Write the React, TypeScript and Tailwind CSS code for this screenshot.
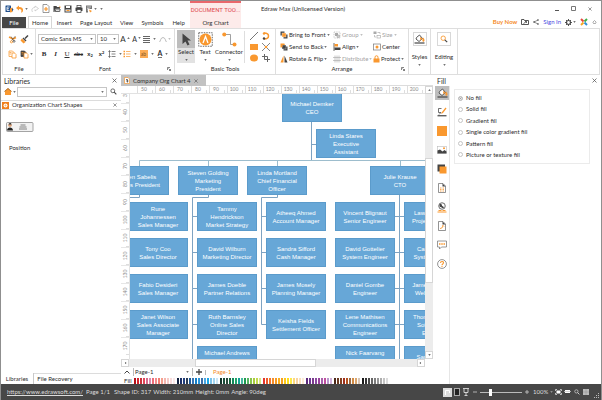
import React from "react";
import type { ReactNode } from "react";

const O = "#f9982f";
const D = "#444444";

function Svg({ w, h, vb, children }: { w: number; h: number; vb?: string; children: ReactNode }) {
  return (
    <svg width={w} height={h} viewBox={vb ?? `0 0 ${w} ${h}`} className="block shrink-0" fill="none" aria-hidden="true">
      {children}
    </svg>
  );
}

function Caret({ color = D }: { color?: string }) {
  return (
    <Svg w={3} h={2} vb="0 0 6 4">
      <path d="M0.5 0.5h5L3 3.5z" fill={color} />
    </Svg>
  );
}

function Cross({ s = 5 }: { s?: number }) {
  return (
    <Svg w={s} h={s} vb="0 0 10 10">
      <path d="M1 1l8 8M9 1l-8 8" stroke="#555" strokeWidth="1.5" />
    </Svg>
  );
}

function Launcher() {
  return (
    <Svg w={4} h={4} vb="0 0 8 8">
      <path d="M1 6V1h5M3 3l4 4M7 4v3H4" stroke={D} strokeWidth="1.3" />
    </Svg>
  );
}

function Btn({ label, className, children }: { label: string; className: string; children: ReactNode }) {
  return (
    <button type="button" aria-label={label} className={`flex shrink-0 items-center justify-center gap-px ${className}`}>
      {children}
    </button>
  );
}

/* ---------- icons ---------- */

const Logo = () => (
  <Svg w={9} h={8} vb="0 0 18 16">
    <rect x="1" y="1" width="11" height="13" rx="1" fill="#1f4e8c" />
    <path d="M9 4H4v7h5M4 7.5h4" stroke="#fff" strokeWidth="1.6" />
    <path d="M10 7l5-2v9l-5 1z" fill={O} />
    <path d="M14 6l3 3-3 4z" fill="#1f4e8c" />
  </Svg>
);
const Undo = () => (
  <Svg w={8} h={8} vb="0 0 16 16">
    <path d="M0 6l6-5v3c6 0 9 3 8 8-1 2-2 3-4 3 2-4 1-7-4-7v3z" fill={O} />
  </Svg>
);
const Redo = () => (
  <Svg w={8} h={8} vb="0 0 16 16">
    <path d="M3 14c-3-5 0-9 5-9V2l7 5-7 5V9" stroke="#c4c4c4" strokeWidth="1.5" />
  </Svg>
);
const NewDoc = () => (
  <Svg w={8} h={9} vb="0 0 16 18">
    <path d="M2 1h8l4 4v12H2z" stroke="#666" strokeWidth="1.3" fill="#fff" />
    <path d="M8 6v8M4 10h8" stroke={O} strokeWidth="2.4" />
  </Svg>
);
const Open = () => (
  <Svg w={8} h={8} vb="0 0 16 16">
    <path d="M1 2h6l1 2h6v10H1z" fill={D} />
    <path d="M3 14l2-6h11l-2 6z" fill={D} stroke="#fff" strokeWidth=".8" />
    <path d="M9 5h4V1l3 4" fill={O} />
    <rect x="6" y="9" width="7" height="3" fill="#ddd" />
  </Svg>
);
const Save = () => (
  <Svg w={8} h={8} vb="0 0 16 16">
    <rect x="1" y="1" width="14" height="14" fill={D} />
    <rect x="4" y="2" width="8" height="4" fill="#fff" />
    <rect x="3" y="9" width="10" height="4" fill="#fff" />
    <path d="M5 11h6" stroke={O} strokeWidth="2" />
  </Svg>
);
const Print = () => (
  <Svg w={8} h={8} vb="0 0 16 16">
    <rect x="4" y="1" width="8" height="4" stroke={D} strokeWidth="1.5" />
    <rect x="1" y="5" width="14" height="7" rx="1" fill={D} />
    <rect x="4" y="9" width="8" height="6" fill="#fff" stroke={D} strokeWidth="1.5" />
  </Svg>
);
const Layout = () => (
  <Svg w={8} h={8} vb="0 0 16 16">
    <path d="M2 1h12v7H6v7H2z" fill="#777" />
    <path d="M4 4h8M4 7h5M4 10h2" stroke="#fff" strokeWidth="1.2" />
    <path d="M8 9l6 3-4 3z" fill={O} />
  </Svg>
);
const Cut = () => (
  <Svg w={9} h={9} vb="0 0 18 18">
    <path d="M2 4l8 4M10 8l6-3" stroke={O} strokeWidth="3" />
    <path d="M15 2l-8 9M6 3l5 8" stroke={D} strokeWidth="1.2" />
    <circle cx="7" cy="13.500" r="2.200" stroke={O} strokeWidth="1.8" />
    <circle cx="12" cy="12.500" r="2" stroke={D} strokeWidth="1.5" />
  </Svg>
);
const Brush = () => (
  <Svg w={9} h={9} vb="0 0 18 18">
    <path d="M16 1L10 7" stroke={D} strokeWidth="3" />
    <path d="M7 5l6 6-2 2-6-6z" fill={D} />
    <path d="M4 7l7 7-4 3-6-6z" fill={O} />
  </Svg>
);
const Copy = ({ dark = false }: { dark?: boolean }) => (
  <Svg w={9} h={9} vb="0 0 18 18">
    <path d="M2 2h7l3 3v8H2z" fill={dark ? D : "#fff"} stroke={dark ? D : O} strokeWidth="1.5" />
    <path d="M8 6h5l3 3v7H8z" fill="#fff" stroke={O} strokeWidth="1.6" />
    <path d="M3 5h4M3 8h3" stroke={O} strokeWidth="1.5" />
  </Svg>
);
const Lines = () => (
  <Svg w={7} h={7}>
    <path d="M0 .5h7M0 2.500h7M0 4.500h7M0 6.500h7" stroke="#666" />
  </Svg>
);
const Spacing = () => (
  <Svg w={8} h={8} vb="0 0 16 16">
    <path d="M3 2v12M1 4l2-3 2 3M1 12l2 3 2-3M7 3h8M7 8h8M7 13h8" stroke={D} strokeWidth="1.3" />
  </Svg>
);
const Bullets = () => (
  <Svg w={8} h={8} vb="0 0 16 16">
    <path d="M1 3h3M1 8h3M1 13h3" stroke={O} strokeWidth="3" />
    <path d="M6 3h9M6 8h9M6 13h9" stroke={O} strokeWidth="1.4" />
  </Svg>
);
const Arc = () => (
  <Svg w={8} h={7} vb="0 0 16 14">
    <path d="M1 12c2-1 2-9 7-9s5 8 7 9" stroke="#a5a5a5" strokeWidth="1.5" />
  </Svg>
);
const Pointer = () => (
  <Svg w={11} h={13} vb="0 0 22 26">
    <path d="M3 1l17 14h-7l4 8-4 2-4-8-6 5z" fill={D} />
  </Svg>
);
const TextTool = () => (
  <Svg w={15} h={15} vb="0 0 30 30">
    <rect x="1.500" y="1.500" width="27" height="27" stroke={D} strokeWidth="1.6" strokeDasharray="3 2" />
    <circle cx="15" cy="15" r="12" fill={O} />
    <path d="M10 22l5-13 5 13" stroke="#fff" strokeWidth="2.600" />
  </Svg>
);
const ConnectorTool = () => (
  <Svg w={15} h={15} vb="0 0 30 30">
    <path d="M5 5h12v20h8" stroke="#888" strokeWidth="1.6" />
    <circle cx="4.500" cy="5" r="4" fill={O} />
    <circle cx="25" cy="25" r="4" fill={O} />
  </Svg>
);
const Stack = ({ back = false }: { back?: boolean }) => (
  <Svg w={8} h={8} vb="0 0 16 16">
    <rect x="1" y="1" width="8" height="8" fill={back ? O : D} />
    <rect x="7" y="7" width="8" height="8" fill={D} />
    <rect x="4" y="4" width="8" height="8" fill={back ? D : O} stroke="#fff" strokeWidth=".7" />
    {back && <path d="M2 2h7v2H5v4H2z" fill={O} />}
  </Svg>
);
const Flip = () => (
  <Svg w={8} h={8} vb="0 0 16 16">
    <path d="M7 1v14H1z" fill={O} />
    <path d="M9 1v14h6z" fill={D} />
  </Svg>
);
const GroupI = () => (
  <Svg w={8} h={8} vb="0 0 16 16">
    <rect x="2" y="2" width="12" height="12" stroke="#aaa" strokeDasharray="2 1.5" strokeWidth="1.3" />
    <rect x="4" y="4" width="6" height="6" fill="#aaa" />
    <rect x="8" y="8" width="5" height="5" fill="#ccc" stroke="#999" />
  </Svg>
);
const AlignI = () => (
  <Svg w={8} h={8} vb="0 0 16 16">
    <path d="M2 0v16" stroke={D} strokeWidth="1.6" />
    <rect x="3" y="2" width="7" height="5" fill={O} />
    <rect x="3" y="9" width="12" height="5" fill={D} />
  </Svg>
);
const Distribute = () => (
  <Svg w={8} h={8} vb="0 0 16 16">
    <path d="M4 1v14M8 1v14M12 1v14M0 5h16M0 11h16" stroke="#aaa" strokeWidth="1.3" />
  </Svg>
);
const SizeI = () => (
  <Svg w={8} h={8} vb="0 0 16 16">
    <rect x="1" y="1" width="6" height="5" fill="#aaa" />
    <path d="M9 3h5v3" stroke="#aaa" strokeWidth="1.3" />
    <rect x="8" y="9" width="7" height="5" stroke="#aaa" strokeWidth="1.3" />
    <path d="M3 8v4h3" stroke="#aaa" strokeWidth="1.3" />
  </Svg>
);
const CenterI = () => (
  <Svg w={8} h={8} vb="0 0 16 16">
    <rect x="1" y="2" width="14" height="12" stroke="#777" strokeWidth="1.4" />
    <circle cx="8" cy="8" r="3" fill={O} />
  </Svg>
);
const Lock = () => (
  <Svg w={7} h={8} vb="0 0 14 16">
    <path d="M4 8V4.500a3 3 0 016 0V8" stroke={O} strokeWidth="2" />
    <rect x="1" y="7" width="12" height="8" fill={O} />
  </Svg>
);
const Bucket = () => (
  <Svg w={11} h={10} vb="0 0 22 20">
    <path d="M5 7l6-5 6 7-7 6-6-5z" fill="#fff" stroke={D} strokeWidth="1.8" />
    <path d="M12 6l5 3-4 4z" fill={O} />
    <path d="M18 7c3 3 4 6 2 8s-5 0-2-8z" fill={O} />
    <path d="M1 18h20" stroke={D} strokeWidth="2.4" />
  </Svg>
);
const Magnifier = ({ s, h, c }: { s: number; h: string; c: string }) => (
  <Svg w={s} h={s} vb="0 0 20 20">
    <circle cx="8" cy="8" r="5.500" stroke={c} strokeWidth="2.200" />
    <path d="M12 12l6 6" stroke={h} strokeWidth="3" />
  </Svg>
);
const PenLine = () => (
  <Svg w={10} h={10} vb="0 0 20 20">
    <path d="M9 3H3v8h5l-4 4" stroke={D} strokeWidth="1.5" />
    <path d="M17 1l2 2-7 9-4 2 2-4z" fill={O} />
    <path d="M1 17.500h18" stroke={D} strokeWidth="2.4" />
  </Svg>
);
const OrangeBox = () => (
  <Svg w={10} h={10}>
    <rect width="10" height="10" fill={O} />
  </Svg>
);
const Picture = () => (
  <Svg w={10} h={8} vb="0 0 20 16">
    <rect x=".7" y=".7" width="18.600" height="14.600" stroke="#bbb" strokeWidth="1.2" />
    <path d="M1 15V9l5-2 5 4 4-3 4 3v4z" fill={D} />
    <circle cx="14" cy="4.500" r="2" fill={O} />
  </Svg>
);
const Shadow = () => (
  <Svg w={10} h={10} vb="0 0 20 20">
    <rect x="1" y="1" width="15" height="14" fill={D} />
    <rect x="5" y="5" width="14" height="14" fill={O} />
  </Svg>
);
const PageI = ({ link = false }: { link?: boolean }) => (
  <Svg w={8} h={10} vb="0 0 16 20">
    <path d="M1 1h9l5 5v13H1z" stroke="#666" strokeWidth="1.4" fill="#fff" />
    <path d="M9 1v6h6z" fill={D} />
    {link ? (
      <path d="M5 16c-1-3 5-1 4-5s3-1 3 0" stroke={O} strokeWidth="2" />
    ) : (
      <path d="M4 10h3M9 10h3M4 13h3M9 13h3M4 16h3M9 16h3" stroke={O} strokeWidth="1.6" />
    )}
  </Svg>
);
const Globe = () => (
  <Svg w={10} h={11} vb="0 0 20 22">
    <circle cx="10" cy="8" r="6.500" stroke={D} strokeWidth="1.6" />
    <path d="M5 5c3-2 5 0 5 2s3 1 4 4c-3 3-5-1-7-1s-2-3-2-5z" fill={D} />
    <path d="M3 17h6M11 17h6M1 20h18" stroke={O} strokeWidth="2" />
  </Svg>
);
const Comment = () => (
  <Svg w={10} h={10} vb="0 0 20 20">
    <path d="M1 2h18v12H9l-4 4v-4H1z" stroke="#777" strokeWidth="1.5" />
    <path d="M4 8h3M8.500 8h3M13 8h3" stroke={O} strokeWidth="2.600" />
  </Svg>
);
const Help = () => (
  <Svg w={10} h={10} vb="0 0 20 20">
    <circle cx="10" cy="10" r="8.800" stroke="#666" strokeWidth="1.4" />
    <path d="M7 8c0-4 6-4 6-.5 0 2.500-3 2.500-3 5M10 14v2" stroke={O} strokeWidth="2.200" />
  </Svg>
);
const Gear = () => (
  <Svg w={7} h={7} vb="0 0 14 14">
    <circle cx="7" cy="7" r="4" stroke={D} strokeWidth="2.4" />
    <path d="M7 0v3M7 11v3M0 7h3M11 7h3M2 2l2 2M10 10l2 2M12 2l-2 2M4 10l-2 2" stroke={D} strokeWidth="1.8" />
  </Svg>
);

/* ---------- header ---------- */

function Header() {
  const tabs: [string, string][] = [
    ["Insert", "w-[24px]"],
    ["Page Layout", "w-[40px]"],
    ["View", "w-[22px]"],
    ["Symbols", "w-[30px]"],
    ["Help", "w-[23px]"],
  ];
  return (
    <header className="flex h-[27px] shrink-0">
      <div className="flex w-[189px] shrink-0 flex-col">
        <div className="flex h-[15px] items-center pl-[3px]">
          <Btn label="Edraw" className="w-[10px]"><Logo /></Btn>
          <Btn label="Undo" className="w-[15px]"><Undo /><Caret /></Btn>
          <Btn label="Redo" className="w-[11px]"><Redo /></Btn>
          <Btn label="New" className="w-[11px]"><NewDoc /></Btn>
          <Btn label="Open" className="w-[11px]"><Open /></Btn>
          <Btn label="Save" className="w-[11px]"><Save /></Btn>
          <Btn label="Print" className="w-[11px]"><Print /></Btn>
          <Btn label="Page view" className="w-[14px]"><Layout /><Caret /></Btn>
          <Btn label="Customize" className="w-[6px]"><Caret /></Btn>
        </div>
        <nav className="flex h-[12px] items-end pl-px">
          <button type="button" className="mr-[2px] h-[11px] w-[24px] bg-[#474747] text-white">File</button>
          <button type="button" className="h-[12px] w-[25px] border border-b-0 border-[#d6d6d6] bg-white">Home</button>
          {tabs.map(([t, w]) => (
            <button key={t} type="button" className={`h-[11px] whitespace-nowrap ${w}`}>{t}</button>
          ))}
        </nav>
      </div>
      <div className="flex w-[51px] shrink-0 flex-col items-center border-t-2 border-[#e9686c] bg-[#fdebea]">
        <div className="flex h-[14px] items-center whitespace-nowrap font-['Roboto',sans-serif] text-[#e0484e]">DOCUMENT TOO...</div>
        <button type="button" className="h-[11px]">Org Chart</button>
      </div>
      <div className="flex min-w-0 flex-1 flex-col">
        <div className="flex h-[15px] items-center pl-[20px] pr-[4px]">
          <h1 className="flex-1 whitespace-nowrap">Edraw Max (Unlicensed Version)</h1>
          <Btn label="Minimize" className="w-[17px]"><Svg w={4} h={5}><path d="M0 4.500h4" stroke="#555" /></Svg></Btn>
          <Btn label="Maximize" className="w-[17px]"><Svg w={5} h={5}><path d="M.5.5h4v4h-4z" stroke="#777" /></Svg></Btn>
          <Btn label="Close" className="w-[15px]"><Cross s={4} /></Btn>
        </div>
        <div className="flex h-[12px] items-center justify-end gap-[3px] pr-[3px]">
          <a href="#buy" className="font-bold text-[#f58a1f]">Buy Now</a>
          <Btn label="Export" className="w-[9px]">
            <Svg w={8} h={6} vb="0 0 16 12"><path d="M1 1h5l1 2h8v8H1z" stroke={D} strokeWidth="1.8" /><path d="M5 9l6-4M8 5h3v3" stroke={D} strokeWidth="1.6" /></Svg>
          </Btn>
          <Btn label="Share" className="w-[8px]">
            <Svg w={6} h={6} vb="0 0 12 12"><path d="M10 2L2 6l8 4" stroke={D} strokeWidth="1.2" /><circle cx="10" cy="2" r="1.6" fill={D} /><circle cx="2" cy="6" r="1.6" fill={D} /><circle cx="10" cy="10" r="1.6" fill={D} /></Svg>
          </Btn>
          <a href="#sign-in" className="text-[#4a48e0]">Sign In</a>
          <Btn label="Settings" className="w-[12px]"><Gear /><Caret /></Btn>
          <Btn label="Edraw online" className="w-[9px]">
            <Svg w={8} h={8} vb="0 0 16 16">
              <path d="M2 2l5 5" stroke="#e5453a" strokeWidth="4" /><path d="M14 2L9 7" stroke="#3fae49" strokeWidth="4" />
              <path d="M2 14l5-5" stroke="#f5a623" strokeWidth="4" /><path d="M14 14L9 9" stroke="#2f8fd8" strokeWidth="4" />
            </Svg>
          </Btn>
          <Btn label="Collapse ribbon" className="w-[7px]">
            <Svg w={5} h={4} vb="0 0 10 8"><path d="M1 5l4-4 4 4M3 5v2h4V5" stroke="#777" strokeWidth="1.2" /></Svg>
          </Btn>
        </div>
      </div>
    </header>
  );
}

/* ---------- ribbon ---------- */

function Group({ title, w, launcher, children }: { title?: string; w: string; launcher?: boolean; children: ReactNode }) {
  return (
    <section className={`flex shrink-0 flex-col border-r border-[#dedede] ${w}`}>
      <div className="flex min-h-0 flex-1">{children}</div>
      {title && (
        <div className="flex h-[10px] items-center px-[3px]">
          <span className="w-[4px]" />
          <span className="flex-1 text-center">{title}</span>
          <span className="w-[4px]">{launcher && <Launcher />}</span>
        </div>
      )}
    </section>
  );
}

function ArrangeItem({ icon, label, caret, off }: { icon: ReactNode; label: string; caret?: boolean; off?: boolean }) {
  return (
    <button type="button" disabled={off} className={`flex h-[11px] items-center gap-px whitespace-nowrap ${off ? "text-[#a3a3a3]" : ""}`}>
      {icon}
      <span>{label}</span>
      {caret && <Caret color={off ? "#aaa" : D} />}
    </button>
  );
}

function Ribbon() {
  const g = "font-['Liberation_Serif',serif] text-[7px] leading-[8px]";
  return (
    <div className="mx-px flex h-[47px] shrink-0 border border-[#dedede]">
      <Group title="File" w="w-[33px]">
        <div className="grid flex-1 grid-cols-[12px_17px] content-center gap-y-[6px] pl-[3px]">
          <Btn label="Cut" className="w-[12px]"><Cut /></Btn>
          <Btn label="Format painter" className="w-[12px]"><Brush /></Btn>
          <Btn label="Copy" className="w-[12px]"><Copy /></Btn>
          <Btn label="Paste" className="w-[16px]"><Copy dark /><Caret /></Btn>
        </div>
      </Group>
      <Group title="Font" w="w-[139px]" launcher>
        <div className="flex flex-1 flex-col justify-center gap-[5px] pl-[2px]">
          <div className="flex h-[10px] items-center">
            <label className="relative flex">
              <select aria-label="Font family" className="h-[10px] w-[58px] appearance-none border border-[#c6c6c6] bg-white pl-[2px]"><option>Comic Sans MS</option></select>
              <span className="pointer-events-none absolute right-[3px] top-[4px]"><Caret /></span>
            </label>
            <label className="relative ml-px flex">
              <select aria-label="Font size" className="h-[10px] w-[22px] appearance-none border border-[#c6c6c6] bg-white pl-[2px]"><option>10</option></select>
              <span className="pointer-events-none absolute right-[3px] top-[4px]"><Caret /></span>
            </label>
            <Btn label="Grow font" className="w-[12px] text-[8px]">A<span className="-mt-[3px] rotate-180"><Caret /></span></Btn>
            <Btn label="Shrink font" className="w-[11px] text-[7px]">A<span className="-mt-[3px]"><Caret /></span></Btn>
            <Btn label="Align text" className="w-[15px]"><Lines /><span className="w-px" /><Caret /></Btn>
            <Btn label="Curve" className="w-[16px]"><Arc /><Caret color="#aaa" /></Btn>
          </div>
          <div className="flex h-[10px] items-center">
            <Btn label="Bold" className={`w-[12px] font-bold ${g}`}>B</Btn>
            <Btn label="Italic" className={`w-[11px] font-bold italic ${g}`}>I</Btn>
            <Btn label="Underline" className={`w-[12px] underline ${g}`}>U</Btn>
            <Btn label="Strikethrough" className="w-[11px] line-through">abc</Btn>
            <Btn label="Subscript" className="w-[12px] font-bold"><span>x<sub className="text-[4px]">2</sub></span></Btn>
            <Btn label="Superscript" className="w-[11px] font-bold"><span>x<sup className="text-[4px]">2</sup></span></Btn>
            <Btn label="Line spacing" className="w-[15px]"><Spacing /><span className="w-px" /><Caret /></Btn>
            <Btn label="Bullets" className="w-[16px]"><Bullets /><span className="w-px" /><Caret /></Btn>
            <Btn label="Highlight" className="w-[17px]"><span className="h-[8px] w-[8px] bg-[#fbab55] text-[5px] leading-[8px] text-[#7a5526]">ab</span><span className="w-px" /><Caret /></Btn>
            <Btn label="Font color" className="w-[16px]"><span className="border-b border-[#777] text-[7px] font-bold leading-[7px]">A</span><span className="w-px" /><Caret /></Btn>
          </div>
        </div>
      </Group>
      <Group title="Basic Tools" w="w-[101px]">
        <div className="flex flex-1 pl-[2px] pt-px">
          <button type="button" className="flex h-[33px] w-[18px] flex-col items-center bg-[#e2e2e2]">
            <span className="flex h-[18px] w-full items-center justify-center bg-[#bdbdbd]"><Pointer /></span>
            <span className="mb-[3px]">Select</span><Caret />
          </button>
          <button type="button" className="flex h-[33px] w-[20px] flex-col items-center">
            <span className="flex h-[18px] items-center"><TextTool /></span><span className="mb-[3px]">Text</span><Caret />
          </button>
          <button type="button" className="flex h-[33px] w-[28px] flex-col items-center">
            <span className="flex h-[18px] items-center"><ConnectorTool /></span><span className="mb-[3px]">Connector</span><Caret />
          </button>
          <div className="my-px ml-px grid flex-1 grid-cols-[12px_12px] content-center justify-center gap-y-[3px] border-l border-[#dedede]">
            <Btn label="Line" className=""><Svg w={8} h={8}><path d="M0 8L8 0" stroke="#777" /></Svg></Btn>
            <Btn label="Curve" className=""><Svg w={8} h={8}><path d="M2 1c6 0 6 6 0 6" stroke={O} strokeWidth="1.5" /><circle cx="2" cy="1.500" r="1.2" fill={O} /><circle cx="2" cy="6.500" r="1.2" fill={D} /></Svg></Btn>
            <Btn label="Rectangle" className=""><Svg w={8} h={8}><rect y="1" width="8" height="6" fill={O} /></Svg></Btn>
            <Btn label="Delete point" className=""><Svg w={8} h={8}><path d="M0 0l8 8M8 0L0 8" stroke="#777" strokeWidth=".9" /><circle cx="4" cy="4" r="1.3" fill={O} /></Svg></Btn>
            <Btn label="Ellipse" className=""><Svg w={8} h={8}><ellipse cx="4" cy="4" rx="4" ry="3.500" fill={O} /></Svg></Btn>
            <Btn label="Crop" className=""><Svg w={8} h={8}><path d="M2.500 0v5.500h5.500M0 2.500h5.500V8" stroke="#666" /></Svg></Btn>
          </div>
        </div>
      </Group>
      <Group title="Arrange" w="w-[133px]" launcher>
        <div className="grid flex-1 grid-cols-[53px_40px_auto] content-center justify-items-start gap-y-px pl-[4px]">
          <ArrangeItem icon={<Stack />} label="Bring to Front" caret />
          <ArrangeItem icon={<GroupI />} label="Group" caret off />
          <ArrangeItem icon={<SizeI />} label="Size" caret off />
          <ArrangeItem icon={<Stack back />} label="Send to Back" caret />
          <ArrangeItem icon={<AlignI />} label="Align" caret />
          <ArrangeItem icon={<CenterI />} label="Center" />
          <ArrangeItem icon={<Flip />} label="Rotate &amp; Flip" caret />
          <ArrangeItem icon={<Distribute />} label="Distribute" caret off />
          <ArrangeItem icon={<Lock />} label="Protect" caret />
        </div>
      </Group>
      <Group w="w-[22px]">
        <button type="button" className="flex flex-1 flex-col items-center pt-[3px]">
          <span className="flex h-[14px] w-[14px] items-center justify-center border border-[#d8d8d8]"><Bucket /></span>
          <span className="mb-[3px] mt-[7px]">Styles</span><Caret />
        </button>
      </Group>
      <Group w="w-[27px]">
        <button type="button" className="flex flex-1 flex-col items-center pt-[3px]">
          <span className="flex h-[14px] w-[14px] items-center justify-center border border-[#d8d8d8]"><Magnifier s={8} c={O} h={D} /></span>
          <span className="mb-[3px] mt-[7px]">Editing</span><Caret />
        </button>
      </Group>
    </div>
  );
}

/* ---------- libraries ---------- */

function Libraries() {
  return (
    <aside className="flex w-[120px] shrink-0 flex-col">
      <div className="flex h-[11px] items-center justify-between pl-[3px] pr-[4px] text-[7px]">
        <h2>Libraries</h2>
        <Btn label="Close libraries" className="w-[6px]"><Cross /></Btn>
      </div>
      <div className="flex h-[11px] items-center pl-[2px] pr-[2px]">
        <Btn label="Home" className="w-[14px]">
          <Svg w={8} h={7} vb="0 0 16 14"><path d="M0 7l8-7 8 7h-2v7H2V7z" fill={O} /><path d="M1 7l7-6 7 6" stroke="#7b5a2e" strokeWidth="1.3" /></Svg>
          <Caret />
        </Btn>
        <label className="relative flex flex-1">
          <input aria-label="Search libraries" className="h-[10px] w-full min-w-0 border border-[#c6c6c6] bg-white px-[2px]" />
          <span className="absolute right-[3px] top-[4px]"><Caret /></span>
        </label>
        <Btn label="Search" className="w-[12px]"><Magnifier s={7} c={D} h={D} /></Btn>
      </div>
      <div className="mt-[3px] flex h-[10px] items-center gap-[3px] border-y border-[#dcdcdc] pl-px pr-[4px]">
        <Svg w={7} h={7}><rect width="7" height="7" fill="#f07f1c" /><circle cx="3.500" cy="3.500" r="2" fill="#fff" /><circle cx="3.500" cy="3.500" r="1" fill="#f9b46a" /></Svg>
        <h3 className="flex-1 whitespace-nowrap">Organization Chart Shapes</h3>
        <Btn label="Close shapes" className="w-[5px]"><Cross s={4} /></Btn>
      </div>
      <figure className="ml-[5px] mt-[12px] w-[40px]">
        <Svg w={28} h={10} vb="0 0 56 20">
          <rect x="1" y="1" width="53" height="18" rx="2" fill="#f2f2f2" stroke="#888" strokeWidth="1.5" />
          <circle cx="8" cy="6.500" r="3.500" fill="#d9a27a" /><path d="M5 5c1-4 6-4 6 0z" fill="#333" />
          <path d="M2 17c0-8 12-8 12 0z" fill="#222" />
          <path d="M29 6h10M27 10h14M26 14h16" stroke="#666" strokeWidth="1.6" />
        </Svg>
        <figcaption className="mt-[12px] pl-[3px]">Position</figcaption>
      </figure>
      <div className="mt-auto flex h-[11px]">
        <button type="button" className="w-[33px] border-r border-[#c9c9c9]">Libraries</button>
        <button type="button" className="w-[42px] border-t border-[#dcdcdc]">File Recovery</button>
        <span className="flex-1 border-t border-[#dcdcdc]" />
      </div>
    </aside>
  );
}

/* ---------- drawing ---------- */

type Person = { x: number; y: number; t: string[] };

const people: Person[] = [
  { x: 152, y: -1, t: ["Michael Demker", "CEO"] },
  { x: 186, y: 35, t: ["Linda Stares", "Executive", "Assistant"] },
  { x: -21, y: 72, t: ["Allen Sabelis", "Sales President"] },
  { x: 48, y: 72, t: ["Steven Golding", "Marketing", "President"] },
  { x: 117, y: 72, t: ["Linda Mortland", "Chief Financial", "Officer"] },
  { x: 240, y: 72, t: ["Julie Krause", "CTO"] },
  { x: -2, y: 108, t: ["Rune", "Johannessen", "Sales Manager"] },
  { x: 67, y: 108, t: ["Tammy", "Hendrickson", "Market Strategy"] },
  { x: 136, y: 108, t: ["Atheeq Ahmed", "Account Manager"] },
  { x: 205, y: 108, t: ["Vincent Blignaut", "Senior Engineer"] },
  { x: 274, y: 108, t: ["Lawson Parker", "Project Manager"] },
  { x: -2, y: 144, t: ["Tony Coo", "Sales Director"] },
  { x: 67, y: 144, t: ["David Wilburn", "Marketing Director"] },
  { x: 136, y: 144, t: ["Sandra Sifford", "Cash Manager"] },
  { x: 205, y: 144, t: ["David Gottelier", "System Engineer"] },
  { x: 274, y: 144, t: ["Carla Mason", "System Analyst"] },
  { x: -2, y: 180, t: ["Fabio Desideri", "Sales Manager"] },
  { x: 67, y: 180, t: ["James Doeble", "Partner Relations"] },
  { x: 136, y: 180, t: ["James Mosely", "Planning Manager"] },
  { x: 205, y: 180, t: ["Daniel Gombe", "Engineer"] },
  { x: 274, y: 180, t: ["James Holloway", "Web Designer"] },
  { x: -2, y: 216, t: ["Janet Wilson", "Sales Associate", "Manager"] },
  { x: 67, y: 216, t: ["Ruth Barnsley", "Online Sales", "Director"] },
  { x: 136, y: 216, t: ["Keisha Fields", "Settlement Officer"] },
  { x: 205, y: 216, t: ["Lene Mathisen", "Communications", "Engineer"] },
  { x: 274, y: 216, t: ["Thomas Becker", "Software QA", "Engineer"] },
  { x: 67, y: 252, t: ["Michael Andrews", "Public Relations", "Manager"] },
  { x: 205, y: 252, t: ["Nick Faarvang", "Support", "Engineer"] },
  { x: 274, y: 252, t: ["Sandra Miles", "Engineer"] },
];

function Canvas() {
  return (
    <div className="relative min-w-0 flex-1 overflow-hidden bg-white">
      <svg width="480" height="300" className="absolute left-0 top-0" fill="none" stroke="#7ea3c2" aria-hidden="true">
        <path d="M9.500 72V66.500H480M78.500 66v6M147.500 66v6M270.500 66v6" stroke="#9dbdcd" />
        <path d="M181.500 28v38M181.500 50.500h5" />
        <path d="M9.500 101v2.500H0M78.500 101v2.500H62.500V300M62.500 122.500h5M62.500 158.500h5M62.500 194.500h5M62.500 230.500h5" />
        <path d="M147.500 101v2.500H131.500V230.500M131.500 122.500h5M131.500 158.500h5M131.500 194.500h5M131.500 230.500h5" />
        <path d="M269.500 101V300M265 122.500h9M265 158.500h9M265 194.500h9M265 230.500h9" />
      </svg>
      {people.map((p) => (
        <div
          key={p.t[0] + p.y}
          style={{ left: p.x, top: p.y }}
          className="absolute flex h-[29px] w-[60px] flex-col items-center justify-center whitespace-nowrap border border-[#5b9bcb] bg-[#67a7d7] font-['Liberation_Sans',sans-serif] text-[6px] leading-[8px] text-white"
        >
          {p.t.map((l) => <span key={l}>{l}</span>)}
        </div>
      ))}
    </div>
  );
}

const hMarks = Array.from({ length: 16 }, (_, i) => 50 + i * 10);
const vMarks = Array.from({ length: 15 }, (_, i) => 30 + i * 10);

const swatches: string[][] = [
  ["#b5121b", "#d3222a", "#c8323c", "#e0475a", "#d76a8c", "#d98bb0", "#ee6c78", "#f28c8c", "#f27d72", "#f5a08e", "#f4b6b0", "#f7cbc8", "#f9dcdc", "#fbe8e8"],
  ["#14213f", "#1c2f66", "#22407f", "#2b3d55", "#1e5a9a", "#3474b4", "#1580c8", "#2a94d8", "#3a6ea8", "#4aa6e0", "#19a5e5", "#7cc3ea", "#a3d5f0", "#c9e6f6"],
  ["#12342a", "#1b4d3a", "#2a4a3a", "#14643f", "#0f8a5a", "#1fa56a", "#16a096", "#45b9a0", "#1f9a50", "#55b560", "#8ac44a", "#a8cc3c", "#c3d94e", "#d9e58a"],
  ["#e5352b", "#ee5a2a", "#f2762a", "#f58d2a", "#f79a20", "#f9ae1f", "#f6a11c", "#fdc817", "#fede1a", "#fde94a", "#fbd97c", "#f9d3a0", "#fae0bd", "#fcebd5"],
  ["#5b2a7a", "#6e3692", "#7a3a8e", "#8a4aa0", "#96429a", "#a860ae", "#c04f9e", "#b996cc", "#d0b0da"],
  ["#4a2718", "#6b3a20", "#86401f", "#a0301c", "#b5531f", "#9c6a42", "#d08a45", "#d9a56c", "#d8c6b6"],
  ["#1a1a1a", "#333333", "#4a4a4a", "#666666", "#7d7d7d", "#969696", "#adadad", "#c4c4c4", "#dcdcdc"],
];

function Workspace() {
  const sb = "flex h-[8px] w-[8px] shrink-0 items-center justify-center border border-[#d6d6d6] bg-white";
  return (
    <main className="flex min-w-0 flex-1 flex-col">
      <div className="flex h-[11px] shrink-0 border-b border-[#dcdcdc]">
        <div className="flex h-[11px] items-center gap-[3px] bg-[#c2c2c2] pl-[3px] pr-[7px]">
          <Svg w={6} h={7} vb="0 0 12 14"><path d="M1 1h7l3 3v9H1z" fill="#fff" stroke={O} strokeWidth="1.3" /><path d="M4 5h3v6M4 8h5" stroke={D} strokeWidth="1.5" /></Svg>
          <span className="whitespace-nowrap">Company Org Chart 4</span>
          <Btn label="Close document" className="w-[5px]"><Cross s={4} /></Btn>
        </div>
      </div>
      <div className="flex min-h-0 flex-1">
        <div className="flex min-w-0 flex-1 flex-col">
          <div className="flex h-[8px] shrink-0 overflow-hidden border-b border-[#e2e2e2] pl-[14px] text-[5px] leading-[6px] text-[#8a8a8a]">
            {hMarks.map((m) => (
              <span key={m} className="flex w-[18px] shrink-0 items-end justify-between">
                <span className="h-[8px] w-[3px] border-r border-[#dedede]" />
                <span className="mb-px">{m}</span>
                <span className="h-[3px] w-[3px] border-r border-[#dedede]" />
              </span>
            ))}
          </div>
          <div className="flex min-h-0 flex-1">
            <div className="w-[9px] shrink-0 overflow-hidden border-r border-[#e2e2e2] text-[5px] leading-[6px] text-[#8a8a8a]">
              <div className="-mt-[9px]">
                {vMarks.map((m) => (
                  <span key={m} className="flex h-[18px] flex-col items-center justify-between">
                    <span className="w-[8px] border-b border-[#e6e6e6]" />
                    <span className="-rotate-90">{m}</span>
                    <span className="w-[3px] self-end border-b border-[#dedede]" />
                  </span>
                ))}
              </div>
            </div>
            <Canvas />
          </div>
          <div className="flex h-[8px] shrink-0 bg-[#ececec]">
            <button type="button" aria-label="Scroll left" className={sb}><span className="rotate-90"><Caret /></span></button>
            <span className="flex-[66]" />
            <span className="flex-[120] border border-[#d6d6d6] bg-white" />
            <span className="flex-[101]" />
            <button type="button" aria-label="Scroll right" className={sb}><span className="-rotate-90"><Caret /></span></button>
          </div>
        </div>
        <div className="mb-[8px] flex w-[8px] shrink-0 flex-col bg-[#ececec]">
          <button type="button" aria-label="Scroll up" className={sb}><span className="rotate-180"><Caret /></span></button>
          <span className="flex-[65]" />
          <span className="flex-[124] border border-[#d6d6d6] bg-white" />
          <span className="flex-[69]" />
          <button type="button" aria-label="Scroll down" className={sb}><Caret /></button>
        </div>
      </div>
      <div className="flex h-[10px] shrink-0 items-center">
        <Btn label="Page list" className="w-[12px]"><Svg w={6} h={4} vb="0 0 12 8"><path d="M1 7l5-5 5 5" stroke={D} strokeWidth="2" /></Svg></Btn>
        <label className="relative flex h-[8px] border-x border-[#bbb]">
          <select aria-label="Page" className="h-[8px] w-[58px] appearance-none bg-transparent pl-px"><option>Page-1</option></select>
          <span className="pointer-events-none absolute right-[3px] top-[3px]"><Caret /></span>
        </label>
        <Btn label="Add page" className="w-[12px]"><Svg w={6} h={6}><path d="M3 0v6M0 3h6" stroke={D} strokeWidth="1.3" /></Svg></Btn>
        <span className="h-[5px] w-[8px] border-l border-[#bbb]" />
        <button type="button" className="text-[#f58a1f]">Page-1</button>
      </div>
      <div className="flex h-[7px] shrink-0 items-center">
        <span className="w-[13px] pl-[3px] leading-[7px]">Fill</span>
        <div className="flex gap-[2px]">
          {swatches.map((grp, i) => (
            <div key={i} className="flex gap-px">
              {grp.map((c, j) => <span key={j} className="h-[6px] w-[2px]" style={{ backgroundColor: c }} />)}
            </div>
          ))}
        </div>
      </div>
    </main>
  );
}

/* ---------- fill panel ---------- */

function FillPanel() {
  const icons: [string, ReactNode][] = [
    ["Fill", <Bucket />], ["Line", <PenLine />], ["Quick colour", <OrangeBox />], ["Picture", <Picture />], ["Shadow", <Shadow />],
    ["Page", <PageI />], ["Hyperlink", <Globe />], ["Attachment", <PageI link />], ["Note", <Comment />], ["Help", <Help />],
  ];
  const opts = ["No fill", "Solid fill", "Gradient fill", "Single color gradient fill", "Pattern fill", "Picture or texture fill"];
  return (
    <aside className="flex w-[168px] shrink-0 flex-col">
      <div className="flex h-[11px] shrink-0 items-center justify-between pl-[4px] pr-[4px] text-[7px]">
        <h2>Fill</h2>
        <Btn label="Close panel" className="w-[6px]"><Cross /></Btn>
      </div>
      <div className="flex flex-1">
        <div className="flex w-[17px] shrink-0 flex-col gap-[5px] border-r border-[#e6e6e6] pl-[2px]">
          {icons.map(([n, ic], i) => (
            <button key={n} type="button" aria-label={n} className={`flex h-[14px] w-[14px] items-center justify-center ${i === 0 ? "bg-[#bdbdbd]" : ""}`}>{ic}</button>
          ))}
        </div>
        <fieldset className="ml-[4px] mr-[11px] mt-[3px] flex h-[75px] flex-1 flex-col justify-between border border-[#ebebeb] py-[4px] pl-[3px]">
          {opts.map((o, i) => (
            <label key={o} className="flex items-center gap-[3px] leading-[8px]">
              <input
                type="radio"
                name="fill"
                defaultChecked={i === 0}
                className="h-[5px] w-[5px] appearance-none rounded-full border border-[#c4c4c4] bg-white checked:bg-[#888] checked:shadow-[inset_0_0_0_1px_#eee]"
              />
              {o}
            </label>
          ))}
        </fieldset>
      </div>
    </aside>
  );
}

/* ---------- status bar ---------- */

function StatusBar() {
  return (
    <footer className="flex h-[16px] shrink-0 items-center bg-[#474747] pl-[6px] pr-px text-[#dcdcdc]">
      <div className="flex items-center gap-[2px] whitespace-nowrap">
        <a href="https://www.edrawsoft.com/" className="mr-px underline">https://www.edrawsoft.com/</a>
        <span className="mr-[2px]">Page 1/1</span>
        <span>Shape ID: 317</span>
        <span>Width: 210mm</span>
        <span>Height: 0mm</span>
        <span>Angle: 90deg</span>
      </div>
      <div className="ml-auto flex items-center">
        <Btn label="Normal view" className="h-[9px] w-[9px] bg-[#dcdcdc]"><Svg w={5} h={5}><path d="M.5 5V.5h4V3" stroke="#fff" /></Svg></Btn>
        <Btn label="Page view" className="w-[9px]"><Svg w={6} h={8}><rect x=".5" y=".5" width="5" height="7" fill="#222" stroke="#aaa" /></Svg></Btn>
        <Btn label="Presentation" className="w-[9px]"><Svg w={6} h={8}><path d="M0 .5h6M1 1v3.500h4V1M3 4v3M1.500 7.500h3" stroke="#ddd" strokeWidth=".9" /></Svg></Btn>
        <Btn label="Zoom out" className="w-[10px]"><Svg w={4} h={4}><path d="M0 2h4" stroke="#ccc" strokeWidth=".8" /></Svg></Btn>
        <input
          type="range"
          aria-label="Zoom"
          min={0}
          max={100}
          defaultValue={23}
          className="h-[7px] w-[42px] appearance-none bg-transparent [&::-webkit-slider-runnable-track]:h-px [&::-webkit-slider-runnable-track]:bg-[#bbb] [&::-webkit-slider-thumb]:-mt-[3px] [&::-webkit-slider-thumb]:h-[7px] [&::-webkit-slider-thumb]:w-[3px] [&::-webkit-slider-thumb]:appearance-none [&::-webkit-slider-thumb]:bg-white"
        />
        <Btn label="Zoom in" className="w-[10px]"><Svg w={4} h={4}><path d="M0 2h4M2 0v4" stroke="#ccc" strokeWidth=".8" /></Svg></Btn>
        <span className="ml-px flex w-[20px] items-center justify-between">100%<Caret color="#aaa" /></span>
        <Btn label="Fit page" className="w-[10px]"><Svg w={7} h={6}><path d="M.5 2V.5H2M5 .5h1.500V2M.5 4v1.500H2M5 5.500h1.500V4" stroke="#ddd" strokeWidth=".8" /><rect x="1.500" y="1.500" width="4" height="3" fill="#fff" /></Svg></Btn>
        <Btn label="Fit width" className="w-[9px]"><Svg w={7} h={6}><rect x="1" y="1" width="5" height="3" fill="#fff" /><path d="M0 2.500h7" stroke="#ccc" strokeWidth=".8" /></Svg></Btn>
        <Btn label="Zoom region" className="w-[9px]"><Magnifier s={6} c="#ddd" h="#ddd" /></Btn>
        <Btn label="Full screen" className="w-[9px]"><Svg w={6} h={6}><rect width="6" height="6" fill="#bbb" /><path d="M0 3h6M3 0v6" stroke="#999" strokeWidth=".6" /></Svg></Btn>
      </div>
      <span className="ml-[4px] self-end pb-px"><Svg w={6} h={6}><path d="M4 0h1v1H4zM2 2h1v1H2zM4 2h1v1H4zM0 4h1v1H0zM2 4h1v1H2zM4 4h1v1H4z" fill="#bbb" /></Svg></span>
    </footer>
  );
}

export default function App() {
  return (
    <div className="flex h-screen flex-col overflow-hidden border-l border-r border-t border-[#8f8f8f] bg-white font-['Lato','Open_Sans',sans-serif] text-[6px] leading-[8px] text-[#2e2e2e]">
      <Header />
      <Ribbon />
      <div className="flex min-h-0 flex-1">
        <Libraries />
        <Workspace />
        <FillPanel />
      </div>
      <StatusBar />
    </div>
  );
}
